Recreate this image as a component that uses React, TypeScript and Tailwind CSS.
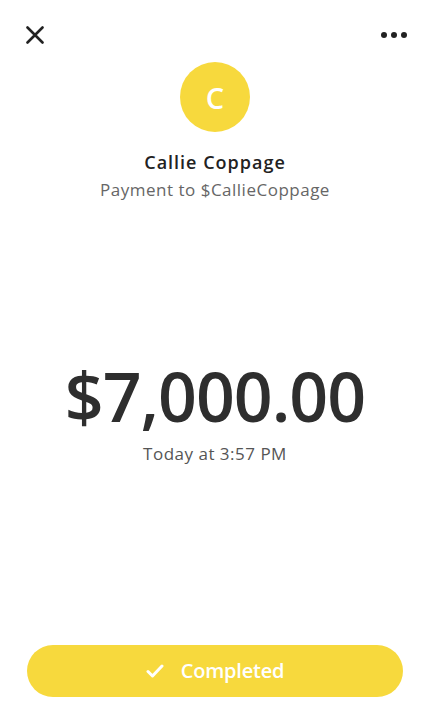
import React from "react";

export default function App() {
  return (
    <div
      className="w-[430px] h-[712px] bg-white flex flex-col relative overflow-hidden"
      style={{ fontFamily: '"Open Sans", "Liberation Sans", sans-serif' }}
    >
      <div className="flex items-center justify-between h-[70px] pl-[26px] pr-[23px]">
        <svg width="18" height="18" viewBox="0 0 18 18">
          <path d="M1.5 1.5 L16.5 16.5 M16.5 1.5 L1.5 16.5" stroke="#222" strokeWidth="2.6" strokeLinecap="round" />
        </svg>
        <div className="flex gap-[4px]">
          <span className="w-[6px] h-[6px] rounded-full bg-[#222]" />
          <span className="w-[6px] h-[6px] rounded-full bg-[#222]" />
          <span className="w-[6px] h-[6px] rounded-full bg-[#222]" />
        </div>
      </div>
      <div className="flex flex-col items-center">
        <div className="w-[70px] h-[70px] rounded-full bg-[#F7D93D] flex items-center justify-center mt-[-8px]">
          <span className="text-white text-[29px] font-semibold leading-none">C</span>
        </div>
        <div className="mt-[18px] text-[18px] font-semibold text-[#222] leading-[24px] tracking-[1px]">Callie Coppage</div>
        <div className="mt-[5px] text-[17px] text-[#666] leading-[22px] tracking-[0.5px]">Payment to $CallieCoppage</div>
      </div>
      <div className="flex flex-col items-center mt-[149px]">
        <div className="text-[68px] font-semibold text-[#2e2e2e] leading-[92px] tracking-[-1px]">$7,000.00</div>
        <div className="mt-[1px] text-[17px] text-[#555] leading-[22px] tracking-[0.5px]">Today at 3:57 PM</div>
      </div>
      <div className="flex-1" />
      <div className="px-[27px] pb-[15px]">
        <div className="h-[52px] rounded-full bg-[#F7D93D] flex items-center justify-center gap-[17px]">
          <svg width="18" height="14" viewBox="0 0 18 14">
            <path d="M2 7.5 L6.5 12 L16 2" stroke="white" strokeWidth="3" fill="none" strokeLinecap="round" strokeLinejoin="round" />
          </svg>
          <span className="text-white text-[20px] font-semibold tracking-[-0.2px]">Completed</span>
        </div>
      </div>
    </div>
  );
}
